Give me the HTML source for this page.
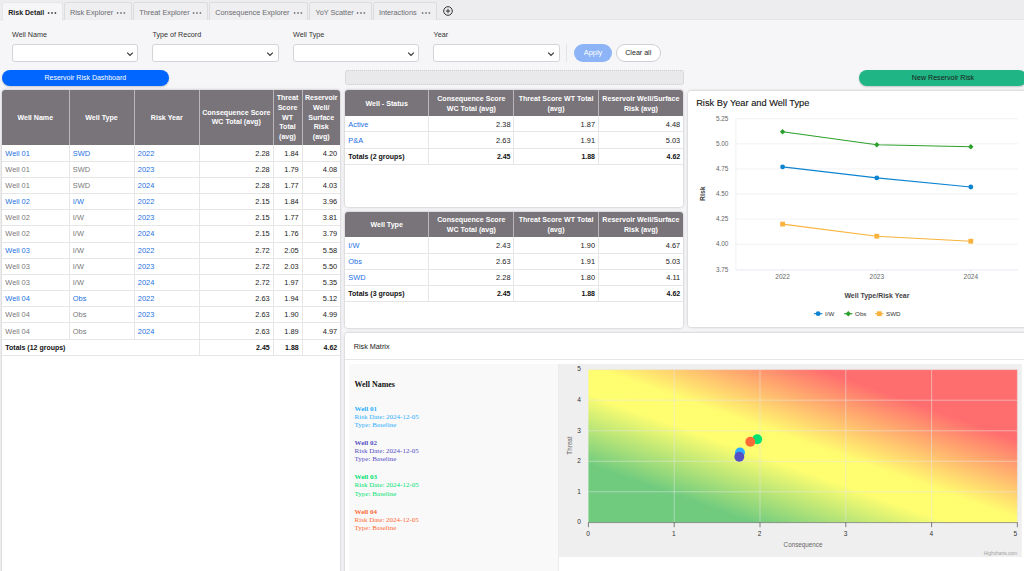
<!DOCTYPE html>
<html lang="en">
<head>
<meta charset="utf-8">
<title>Reservoir Risk Dashboard</title>
<style>
*{box-sizing:border-box;margin:0;padding:0}
html,body{width:1024px;height:571px;overflow:hidden}
body{background:#f6f6f8;font-family:"Liberation Sans",sans-serif;color:#222;position:relative;font-size:7.2px}
.abs{position:absolute}
/* tab bar */
#tabbar{position:absolute;left:0;top:0;width:1024px;height:20.2px;background:#ededef;border-bottom:1px solid #e3e3e6}
.tab{position:absolute;top:2.2px;height:17.4px;border:1px solid #dcdcdf;border-bottom:none;border-radius:2.5px 2.5px 0 0;background:#efeff1;color:#6b6b70;font-size:7.3px;line-height:19px;padding-left:5.2px;white-space:nowrap}
.tab.active{background:#f6f6f8;color:#222;font-weight:bold;font-size:7.05px;border-color:#e6e6e9;height:18.8px}
.tab .dots{position:absolute;right:4.6px;top:7.9px}
/* filters */
.flabel{position:absolute;top:29.6px;font-size:7.2px;line-height:10px;color:#333}
.fsel{position:absolute;top:44.2px;width:126.6px;height:17.4px;background:#fff;border:1px solid #d4d4d8;border-radius:3px}
.fsel svg{position:absolute;right:3.5px;top:5.5px}
.pill{position:absolute;border-radius:9px;text-align:center;white-space:nowrap}
/* tables */
.card{position:absolute;background:#fff;border-radius:3px;box-shadow:0 0 3px rgba(0,0,0,.26)}
table{border-collapse:separate;border-spacing:0;table-layout:fixed;position:absolute;left:0;top:0}
th{background:#78747a;color:#fff;font-weight:bold;font-size:7.1px;line-height:9.6px;text-align:center;vertical-align:middle;border-right:1px solid #b9b7ba;padding:1.5px 1px 0}
th:last-child{border-right:none}
td{font-size:7.4px;height:16.2px;border-right:1px solid #e6e6e6;border-bottom:1px solid #e6e6e6;padding:0 2.8px 0 3.3px;white-space:nowrap;overflow:hidden;color:#222;vertical-align:middle}
td:last-child{border-right:none}
td.n{text-align:right}
td.l{color:#1a70e4}
td.g{color:#777}
tr.tot td{font-weight:bold;color:#111;font-size:7px}
tr:nth-child(2) td{height:16.8px;padding-top:1.4px}
tr.tot td.nb{border-right:none}
#c2 th,#c3 th{padding-top:3.2px}
</style>
</head>
<body>
<!-- TAB BAR -->
<div id="tabbar">
  <div class="tab active" style="left:2.0px;width:60.6px">Risk Detail<svg class="dots" width="10" height="4" viewBox="0 0 10 4"><circle cx="1.6" cy="2" r=".9" fill="#4a4a4f"/><circle cx="5" cy="2" r=".9" fill="#4a4a4f"/><circle cx="8.4" cy="2" r=".9" fill="#4a4a4f"/></svg></div>
  <div class="tab" style="left:63.7px;width:68.3px">Risk Explorer<svg class="dots" width="10" height="4" viewBox="0 0 10 4"><circle cx="1.6" cy="2" r=".9" fill="#7c7c81"/><circle cx="5" cy="2" r=".9" fill="#7c7c81"/><circle cx="8.4" cy="2" r=".9" fill="#7c7c81"/></svg></div>
  <div class="tab" style="left:133.1px;width:74.9px">Threat Explorer<svg class="dots" width="10" height="4" viewBox="0 0 10 4"><circle cx="1.6" cy="2" r=".9" fill="#7c7c81"/><circle cx="5" cy="2" r=".9" fill="#7c7c81"/><circle cx="8.4" cy="2" r=".9" fill="#7c7c81"/></svg></div>
  <div class="tab" style="left:209.1px;width:99.1px">Consequence Explorer<svg class="dots" width="10" height="4" viewBox="0 0 10 4"><circle cx="1.6" cy="2" r=".9" fill="#7c7c81"/><circle cx="5" cy="2" r=".9" fill="#7c7c81"/><circle cx="8.4" cy="2" r=".9" fill="#7c7c81"/></svg></div>
  <div class="tab" style="left:309.3px;width:62.3px">YoY Scatter<svg class="dots" width="10" height="4" viewBox="0 0 10 4"><circle cx="1.6" cy="2" r=".9" fill="#7c7c81"/><circle cx="5" cy="2" r=".9" fill="#7c7c81"/><circle cx="8.4" cy="2" r=".9" fill="#7c7c81"/></svg></div>
  <div class="tab" style="left:372.7px;width:63.9px">Interactions<svg class="dots" width="10" height="4" viewBox="0 0 10 4"><circle cx="1.6" cy="2" r=".9" fill="#7c7c81"/><circle cx="5" cy="2" r=".9" fill="#7c7c81"/><circle cx="8.4" cy="2" r=".9" fill="#7c7c81"/></svg></div>
  <svg class="abs" style="left:442px;top:5px" width="12" height="12" viewBox="0 0 12 12"><circle cx="6" cy="6" r="4.3" fill="none" stroke="#333" stroke-width="1"/><path d="M3.8 6H8.2M6 3.8V8.2" stroke="#333" stroke-width="1" fill="none"/></svg>
</div>

<!-- FILTERS -->
<div class="flabel" style="left:12px">Well Name</div>
<div class="flabel" style="left:152.5px">Type of Record</div>
<div class="flabel" style="left:293px">Well Type</div>
<div class="flabel" style="left:433.5px">Year</div>
<div class="fsel" style="left:11.5px"><svg width="8" height="6" viewBox="0 0 8 6"><path d="M1.2 1.6L4 4.4L6.8 1.6" fill="none" stroke="#333" stroke-width="1.2"/></svg></div>
<div class="fsel" style="left:152px"><svg width="8" height="6" viewBox="0 0 8 6"><path d="M1.2 1.6L4 4.4L6.8 1.6" fill="none" stroke="#333" stroke-width="1.2"/></svg></div>
<div class="fsel" style="left:292.5px"><svg width="8" height="6" viewBox="0 0 8 6"><path d="M1.2 1.6L4 4.4L6.8 1.6" fill="none" stroke="#333" stroke-width="1.2"/></svg></div>
<div class="fsel" style="left:433px"><svg width="8" height="6" viewBox="0 0 8 6"><path d="M1.2 1.6L4 4.4L6.8 1.6" fill="none" stroke="#333" stroke-width="1.2"/></svg></div>
<div class="abs" style="left:566px;top:44px;width:1px;height:18px;background:#e4e4e7"></div>
<div class="pill" style="left:574px;top:44px;width:38px;height:17.5px;background:#8cb4f6;color:#fff;font-size:7.4px;line-height:17.5px">Apply</div>
<div class="pill" style="left:616px;top:44px;width:44.5px;height:17.5px;background:#fff;border:1px solid #d0d0d4;color:#222;font-size:7.1px;line-height:16.6px">Clear all</div>

<!-- BUTTON ROW -->
<div class="pill" style="left:1.6px;top:70px;width:167.4px;height:15.7px;background:#0066ff;color:#fff;font-size:7px;line-height:16px;box-shadow:0 1px 2px rgba(0,0,0,.2)">Reservoir Risk Dashboard</div>
<div class="abs" style="left:344.5px;top:70px;width:339px;height:15px;background:#e9e9eb;border:1px dotted #cbcbd0;border-radius:3px"></div>
<div class="pill" style="left:859px;top:70px;width:168px;height:15.5px;background:#20b584;color:#1a1a1a;font-size:7.1px;line-height:16px;box-shadow:0 1px 2px rgba(0,0,0,.2)">New Reservoir Risk</div>

<!-- LEFT TABLE -->
<div class="card" id="c1" style="left:2px;top:90.3px;width:338px;height:490px">
<table style="width:338px">
<colgroup><col style="width:67.5px"><col style="width:65px"><col style="width:65.5px"><col style="width:73.5px"><col style="width:29px"><col style="width:37.5px"></colgroup>
<tr style="height:54.5px"><th style="border-top-left-radius:3px">Well Name</th><th>Well Type</th><th>Risk Year</th><th>Consequence Score<br>WC Total (avg)</th><th>Threat<br>Score<br>WT<br>Total<br>(avg)</th><th style="border-top-right-radius:3px">Reservoir<br>Well/<br>Surface<br>Risk<br>(avg)</th></tr>
<tr><td class="l">Well 01</td><td class="l">SWD</td><td class="l">2022</td><td class="n">2.28</td><td class="n">1.84</td><td class="n">4.20</td></tr>
<tr><td class="g">Well 01</td><td class="g">SWD</td><td class="l">2023</td><td class="n">2.28</td><td class="n">1.79</td><td class="n">4.08</td></tr>
<tr><td class="g">Well 01</td><td class="g">SWD</td><td class="l">2024</td><td class="n">2.28</td><td class="n">1.77</td><td class="n">4.03</td></tr>
<tr><td class="l">Well 02</td><td class="l">I/W</td><td class="l">2022</td><td class="n">2.15</td><td class="n">1.84</td><td class="n">3.96</td></tr>
<tr><td class="g">Well 02</td><td class="g">I/W</td><td class="l">2023</td><td class="n">2.15</td><td class="n">1.77</td><td class="n">3.81</td></tr>
<tr><td class="g">Well 02</td><td class="g">I/W</td><td class="l">2024</td><td class="n">2.15</td><td class="n">1.76</td><td class="n">3.79</td></tr>
<tr><td class="l">Well 03</td><td class="g">I/W</td><td class="l">2022</td><td class="n">2.72</td><td class="n">2.05</td><td class="n">5.58</td></tr>
<tr><td class="g">Well 03</td><td class="g">I/W</td><td class="l">2023</td><td class="n">2.72</td><td class="n">2.03</td><td class="n">5.50</td></tr>
<tr><td class="g">Well 03</td><td class="g">I/W</td><td class="l">2024</td><td class="n">2.72</td><td class="n">1.97</td><td class="n">5.35</td></tr>
<tr><td class="l">Well 04</td><td class="l">Obs</td><td class="l">2022</td><td class="n">2.63</td><td class="n">1.94</td><td class="n">5.12</td></tr>
<tr><td class="g">Well 04</td><td class="g">Obs</td><td class="l">2023</td><td class="n">2.63</td><td class="n">1.90</td><td class="n">4.99</td></tr>
<tr><td class="g">Well 04</td><td class="g">Obs</td><td class="l">2024</td><td class="n">2.63</td><td class="n">1.89</td><td class="n">4.97</td></tr>
<tr class="tot"><td colspan="3">Totals (12 groups)</td><td class="n">2.45</td><td class="n">1.88</td><td class="n">4.62</td></tr>
</table>
</div>
<!-- MID TABLES -->
<div class="card" id="c2" style="left:345px;top:90.4px;width:338px;height:116.4px">
<table style="width:338px">
<colgroup><col style="width:84.3px"><col style="width:85px"><col style="width:84.5px"><col style="width:84.2px"></colgroup>
<tr style="height:25.3px"><th style="border-top-left-radius:3px">Well - Status</th><th>Consequence Score<br>WC Total (avg)</th><th>Threat Score WT Total<br>(avg)</th><th style="border-top-right-radius:3px">Reservoir Well/Surface<br>Risk (avg)</th></tr>
<tr><td class="l">Active</td><td class="n">2.38</td><td class="n">1.87</td><td class="n">4.48</td></tr>
<tr><td class="l">P&amp;A</td><td class="n">2.63</td><td class="n">1.91</td><td class="n">5.03</td></tr>
<tr class="tot"><td>Totals (2 groups)</td><td class="n">2.45</td><td class="n">1.88</td><td class="n">4.62</td></tr>
</table>
</div>
<div class="card" id="c3" style="left:345px;top:211.7px;width:338px;height:116.5px">
<table style="width:338px">
<colgroup><col style="width:84.3px"><col style="width:85px"><col style="width:84.5px"><col style="width:84.2px"></colgroup>
<tr style="height:25.3px"><th style="border-top-left-radius:3px">Well Type</th><th>Consequence Score<br>WC Total (avg)</th><th>Threat Score WT Total<br>(avg)</th><th style="border-top-right-radius:3px">Reservoir Well/Surface<br>Risk (avg)</th></tr>
<tr><td class="l">I/W</td><td class="n">2.43</td><td class="n">1.90</td><td class="n">4.67</td></tr>
<tr><td class="l">Obs</td><td class="n">2.63</td><td class="n">1.91</td><td class="n">5.03</td></tr>
<tr><td class="l">SWD</td><td class="n">2.28</td><td class="n">1.80</td><td class="n">4.11</td></tr>
<tr class="tot"><td>Totals (3 groups)</td><td class="n">2.45</td><td class="n">1.88</td><td class="n">4.62</td></tr>
</table>
</div>
<!-- LINE CHART -->
<div class="card" id="c4" style="left:688px;top:90.5px;width:345px;height:236.5px">
<svg class="abs" style="left:0;top:0" width="345" height="236.5" viewBox="688 90.5 345 236.5" font-family="'Liberation Sans',sans-serif">
<text x="696.2" y="105.6" font-size="8.9" fill="#141414" stroke="#141414" stroke-width=".12" textLength="113.2" lengthAdjust="spacingAndGlyphs">Risk By Year and Well Type</text>
<path d="M735.9 118.20H1018" stroke="#e9e9e9" stroke-width="0.6" fill="none"/>
<text x="728.4" y="120.40" font-size="6.4" fill="#666" text-anchor="end">5.25</text>
<path d="M735.9 143.30H1018" stroke="#e9e9e9" stroke-width="0.6" fill="none"/>
<text x="728.4" y="145.50" font-size="6.4" fill="#666" text-anchor="end">5.00</text>
<path d="M735.9 168.40H1018" stroke="#e9e9e9" stroke-width="0.6" fill="none"/>
<text x="728.4" y="170.60" font-size="6.4" fill="#666" text-anchor="end">4.75</text>
<path d="M735.9 193.50H1018" stroke="#e9e9e9" stroke-width="0.6" fill="none"/>
<text x="728.4" y="195.70" font-size="6.4" fill="#666" text-anchor="end">4.50</text>
<path d="M735.9 218.60H1018" stroke="#e9e9e9" stroke-width="0.6" fill="none"/>
<text x="728.4" y="220.80" font-size="6.4" fill="#666" text-anchor="end">4.25</text>
<path d="M735.9 243.70H1018" stroke="#e9e9e9" stroke-width="0.6" fill="none"/>
<text x="728.4" y="245.90" font-size="6.4" fill="#666" text-anchor="end">4.00</text>
<text x="728.4" y="271.00" font-size="6.4" fill="#666" text-anchor="end">3.75</text>
<path d="M735.9 118V269.4" stroke="#e6e6e6" stroke-width="0.6" fill="none"/>
<path d="M735.9 269.4H1018" stroke="#d5dcec" stroke-width="0.6" fill="none"/>
<path d="M782.6 269.4V274" stroke="#d5dcec" stroke-width="0.6" fill="none"/>
<text x="782.6" y="278.8" font-size="6.5" fill="#666" text-anchor="middle">2022</text>
<path d="M876.8 269.4V274" stroke="#d5dcec" stroke-width="0.6" fill="none"/>
<text x="876.8" y="278.8" font-size="6.5" fill="#666" text-anchor="middle">2023</text>
<path d="M970.8 269.4V274" stroke="#d5dcec" stroke-width="0.6" fill="none"/>
<text x="970.8" y="278.8" font-size="6.5" fill="#666" text-anchor="middle">2024</text>
<text x="876.9" y="297.9" font-size="6.9" fill="#444" text-anchor="middle" font-weight="bold" textLength="65" lengthAdjust="spacingAndGlyphs">Well Type/Risk Year</text>
<text transform="translate(705.1 193.1) rotate(-90)" font-size="6.9" fill="#444" text-anchor="middle" font-weight="bold">Risk</text>
<polyline points="782.6,131.3 876.8,144.3 970.8,146.3" fill="none" stroke="#2ca02c" stroke-width="1.1" stroke-linejoin="round"/>
<path d="M782.6 128.6l2.7 2.7l-2.7 2.7l-2.7 -2.7z" fill="#2ca02c"/>
<path d="M876.8 141.6l2.7 2.7l-2.7 2.7l-2.7 -2.7z" fill="#2ca02c"/>
<path d="M970.8 143.6l2.7 2.7l-2.7 2.7l-2.7 -2.7z" fill="#2ca02c"/>
<polyline points="782.6,166.4 876.8,177.4 970.8,186.5" fill="none" stroke="#0d84d0" stroke-width="1.1" stroke-linejoin="round"/>
<circle cx="782.6" cy="166.4" r="2.4" fill="#0d84d0"/>
<circle cx="876.8" cy="177.4" r="2.4" fill="#0d84d0"/>
<circle cx="970.8" cy="186.5" r="2.4" fill="#0d84d0"/>
<polyline points="782.6,223.6 876.8,235.7 970.8,240.7" fill="none" stroke="#f9b33c" stroke-width="1.1" stroke-linejoin="round"/>
<rect x="780.2" y="221.2" width="4.8" height="4.8" fill="#f9b33c"/>
<rect x="874.4" y="233.3" width="4.8" height="4.8" fill="#f9b33c"/>
<rect x="968.4" y="238.3" width="4.8" height="4.8" fill="#f9b33c"/>
<path d="M813.9 313.2H822.3" stroke="#0d84d0" stroke-width="1.1"/>
<circle cx="818.1" cy="313.2" r="2.4" fill="#0d84d0"/>
<text x="825.0" y="315.4" font-size="6.2" fill="#333">I/W</text>
<path d="M844.1 313.2H852.5" stroke="#2ca02c" stroke-width="1.1"/>
<path d="M848.3 310.5l2.7 2.7l-2.7 2.7l-2.7 -2.7z" fill="#2ca02c"/>
<text x="855.1" y="315.4" font-size="6.2" fill="#333">Obs</text>
<path d="M875.1 313.2H883.5" stroke="#f9b33c" stroke-width="1.1"/>
<rect x="876.9" y="310.8" width="4.8" height="4.8" fill="#f9b33c"/>
<text x="886.0" y="315.4" font-size="6.2" fill="#333">SWD</text>
</svg>
</div>
<!-- RISK MATRIX -->
<div class="card" id="c5" style="left:345px;top:333.4px;width:690px;height:245px">
<div class="abs" style="left:8.7px;top:8.3px;font-size:7.25px;line-height:10px;color:#222">Risk Matrix</div>
<div class="abs" style="left:0;top:25.4px;width:690px;height:1px;background:#e6e6e6"></div>
<div class="abs" id="wn" style="left:4.2px;top:30.3px;width:209.6px;height:215px;background:#f9f9f9;border-right:1px solid #ececec;font-family:'Liberation Serif',serif;font-size:7px;line-height:8.1px">
<div class="abs" style="left:5.4px;top:16.4px;font-size:7.95px;line-height:10px;font-weight:bold;color:#111">Well Names</div>
<div class="abs" style="left:5.4px;top:40.9px;color:#2caffe;white-space:nowrap"><b>Well 01</b><br>Risk Date: 2024-12-05<br>Type: Baseline</div>
<div class="abs" style="left:5.4px;top:75.3px;color:#544fc5;white-space:nowrap"><b>Well 02</b><br>Risk Date: 2024-12-05<br>Type: Baseline</div>
<div class="abs" style="left:5.4px;top:109.7px;color:#00e272;white-space:nowrap"><b>Well 03</b><br>Risk Date: 2024-12-05<br>Type: Baseline</div>
<div class="abs" style="left:5.4px;top:144.1px;color:#fe6a35;white-space:nowrap"><b>Well 04</b><br>Risk Date: 2024-12-05<br>Type: Baseline</div>
</div>
<svg class="abs" style="left:213.8px;top:30.2px" width="462.8" height="193.2" viewBox="558.8 363.6 462.8 193.2" font-family="'Liberation Sans',sans-serif">
<defs><linearGradient id="rg" x1="0" y1="1" x2="1" y2="0"><stop offset="0" stop-color="#70cb7f"/><stop offset="0.19" stop-color="#70cb7f"/><stop offset="0.42" stop-color="#fffe70"/><stop offset="0.515" stop-color="#fffc70"/><stop offset="0.77" stop-color="#ff6e6e"/><stop offset="1" stop-color="#ff6e6e"/></linearGradient></defs>
<rect x="558.8" y="363.6" width="462.8" height="193.2" fill="#efefef"/>
<rect x="588.2" y="369.2" width="429.0" height="152.8" fill="url(#rg)"/>
<path d="M674.0 369.2V522.0" stroke="#e6e6e6" stroke-opacity=".8" stroke-width="0.65" fill="none"/>
<path d="M588.2 491.4H1017.2" stroke="#e6e6e6" stroke-opacity=".8" stroke-width="0.65" fill="none"/>
<path d="M759.8 369.2V522.0" stroke="#e6e6e6" stroke-opacity=".8" stroke-width="0.65" fill="none"/>
<path d="M588.2 460.9H1017.2" stroke="#e6e6e6" stroke-opacity=".8" stroke-width="0.65" fill="none"/>
<path d="M845.6 369.2V522.0" stroke="#e6e6e6" stroke-opacity=".8" stroke-width="0.65" fill="none"/>
<path d="M588.2 430.4H1017.2" stroke="#e6e6e6" stroke-opacity=".8" stroke-width="0.65" fill="none"/>
<path d="M931.4 369.2V522.0" stroke="#e6e6e6" stroke-opacity=".8" stroke-width="0.65" fill="none"/>
<path d="M588.2 399.8H1017.2" stroke="#e6e6e6" stroke-opacity=".8" stroke-width="0.65" fill="none"/>
<path d="M1017.2 369.2V522.0" stroke="#e6e6e6" stroke-opacity=".8" stroke-width="0.65" fill="none"/>
<path d="M588.2 369.2H1017.2" stroke="#e6e6e6" stroke-opacity=".8" stroke-width="0.65" fill="none"/>
<path d="M588.2 522.2H1017.2" stroke="#333" stroke-opacity=".75" stroke-width="0.6" fill="none"/>
<path d="M588.2 522.0v4.8" stroke="#333" stroke-width="0.6" fill="none"/>
<text x="587.9" y="536.0" font-size="6.6" fill="#333" text-anchor="middle">0</text>
<text x="578.8" y="523.8" font-size="6.6" fill="#333" text-anchor="middle">0</text>
<path d="M674.0 522.0v4.8" stroke="#333" stroke-width="0.6" fill="none"/>
<text x="673.7" y="536.0" font-size="6.6" fill="#333" text-anchor="middle">1</text>
<text x="578.8" y="493.2" font-size="6.6" fill="#333" text-anchor="middle">1</text>
<path d="M759.8 522.0v4.8" stroke="#333" stroke-width="0.6" fill="none"/>
<text x="759.5" y="536.0" font-size="6.6" fill="#333" text-anchor="middle">2</text>
<text x="578.8" y="462.7" font-size="6.6" fill="#333" text-anchor="middle">2</text>
<path d="M845.6 522.0v4.8" stroke="#333" stroke-width="0.6" fill="none"/>
<text x="845.3" y="536.0" font-size="6.6" fill="#333" text-anchor="middle">3</text>
<text x="578.8" y="432.2" font-size="6.6" fill="#333" text-anchor="middle">3</text>
<path d="M931.4 522.0v4.8" stroke="#333" stroke-width="0.6" fill="none"/>
<text x="931.1" y="536.0" font-size="6.6" fill="#333" text-anchor="middle">4</text>
<text x="578.8" y="401.6" font-size="6.6" fill="#333" text-anchor="middle">4</text>
<path d="M1017.2 522.0v4.8" stroke="#333" stroke-width="0.6" fill="none"/>
<text x="1015.1" y="536.0" font-size="6.6" fill="#333" text-anchor="middle">5</text>
<text x="578.8" y="371.1" font-size="6.6" fill="#333" text-anchor="middle">5</text>
<text x="802.8" y="546.6" font-size="6.3" fill="#666" text-anchor="middle">Consequence</text>
<text transform="translate(571.7 445.2) rotate(-90)" font-size="6.3" fill="#666" text-anchor="middle">Threat</text>
<text x="1016.9" y="554.8" font-size="4.8" fill="#a0a0a0" text-anchor="end">Highcharts.com</text>
<circle cx="739.8" cy="452.0" r="4.95" fill="#2caffe"/>
<circle cx="739.1" cy="456.3" r="4.95" fill="#544fc5"/>
<circle cx="757.0" cy="438.8" r="4.95" fill="#00e272"/>
<circle cx="750.1" cy="441.3" r="4.95" fill="#fe6a35"/>
</svg>
</div>
</body>
</html>
